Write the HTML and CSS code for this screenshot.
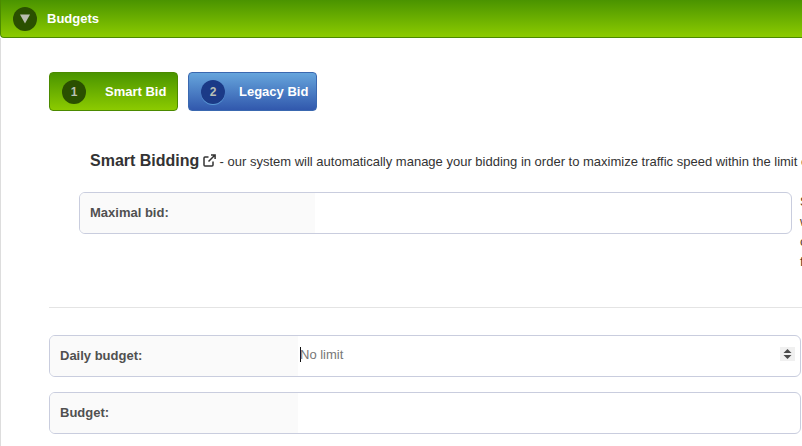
FILE: index.html
```html
<!DOCTYPE html>
<html lang="en">
<head>
<meta charset="utf-8">
<title>Budgets</title>
<link rel="stylesheet" href="styles.css">
</head>
<body>
<div class="panel">
  <header class="panel-head">
    <span class="badge badge-dark head-badge"><svg class="caret" width="12" height="10" viewBox="0 0 12 10"><path d="M1 0.5h10L6 9.5z" fill="#b9bdb0"/></svg></span>
    <span class="head-title">Budgets</span>
  </header>
  <div class="panel-body">
    <div class="tabs">
      <button class="tab tab-green"><span class="badge badge-dark tab-badge">1</span><span class="tab-label tab-label-smart">Smart Bid</span></button>
      <button class="tab tab-blue"><span class="badge badge-blue tab-badge">2</span><span class="tab-label">Legacy Bid</span></button>
    </div>
    <p class="intro"><strong class="intro-title">Smart Bidding</strong> <svg class="ext" width="13" height="13" viewBox="0 0 13 13" fill="none" stroke="#333" stroke-width="1.5"><path d="M10 7.5V11a1 1 0 0 1-1 1H2a1 1 0 0 1-1-1V4a1 1 0 0 1 1-1h3.5"/><path d="M5.5 7.5L12 1M8 .9h4.1V5"/></svg> - our system will automatically manage your bidding in order to maximize traffic speed within the limit of your maximal bid.</p>
    <div class="bid-line">
      <div class="field field-bid">
        <div class="field-label label-bid">Maximal bid:</div>
        <div class="field-value"></div>
      </div>
      <div class="note">Set<br>will<br>can<br>for</div>
    </div>
    <hr class="rule">
    <div class="field field-wide">
      <div class="field-label label-wide">Daily budget:</div>
      <div class="field-value value-select"><span class="cursor"></span><span class="placeholder">No limit</span>
        <span class="spin"><svg width="15" height="14" viewBox="0 0 15 14"><path d="M7.5 2l4 4h-8zM7.5 12l-4-4h8z" fill="#4a4a4a"/></svg></span>
      </div>
    </div>
    <div class="field field-wide">
      <div class="field-label label-wide">Budget:</div>
      <div class="field-value"></div>
    </div>
  </div>
</div>
</body>
</html>
```
FILE: styles.css
```css
* { box-sizing: border-box; }
html, body { margin: 0; height: 446px; overflow: hidden; background: #fff; }
body { font-family: "Liberation Sans", Arial, sans-serif; color: #333; width: 802px; }
.panel { width: 802px; height: 446px; overflow: hidden; }
.panel-head {
  height: 38px;
  display: flex;
  align-items: center;
  padding-left: 12px;
  background: linear-gradient(#4a9400, #8ccb00);
  border: 1px solid #4b8a00;
  border-top: 0;
  border-right: 0;
  border-radius: 0 0 0 4px;
}
.badge { display: flex; align-items: center; justify-content: center; border-radius: 50%; flex: none; }
.badge-dark { background: #2a5000; }
.badge-blue { background: #1b3a87; box-shadow: 0 1px 0 #5a9ad8; }
.head-badge { width: 24px; height: 24px; }
.head-title { margin-left: 10px; color: #fff; font-size: 13px; font-weight: 700; padding-bottom: 1px; }
.panel-body { height: 408px; border-left: 1px solid #ddd; padding: 34px 0 0 48px; }
.tabs { display: flex; gap: 10px; }
.tab {
  width: 129px; height: 39px;
  display: flex; align-items: center;
  padding: 0 0 0 12px;
  border-radius: 4px;
  color: #fff; font: 700 13px "Liberation Sans", Arial, sans-serif;
}
.tab-green { background: linear-gradient(#4a9400, #8ccb00); border: 1px solid #4b8a00; }
.tab-blue { background: linear-gradient(#66a5dc, #3158ad); border: 1px solid #3a68b0; }
.tab-badge { width: 24px; height: 24px; font-size: 12px; color: #b9c0b5; }
.tab-label { margin-left: 14px; }
.tab-label-smart { margin-left: 19px; }
.intro { margin: 40px 0 0 41px; font-size: 13px; line-height: 20px; white-space: nowrap; height: 20px; color: #333; }
.intro-title { font-size: 16px; }
.ext { vertical-align: -1px; }
.bid-line { display: flex; gap: 8px; margin: 21px 0 0 30px; width: 800px; }
.field { display: flex; height: 42px; border: 1px solid #c9cdde; border-radius: 6px; overflow: hidden; background: #fff; flex: none; }
.field-bid { width: 713px; }
.field-wide { width: 752px; margin-bottom: 15px; }
.field-label { background: #fafafa; font-size: 13px; font-weight: 700; color: #505050; display: flex; align-items: center; padding: 0 0 2px 10px; flex: none; }
.label-bid { width: 235px; }
.label-wide { width: 248px; }
.field-value { flex: 1; display: flex; align-items: center; position: relative; }
.value-select { padding-left: 2px; padding-bottom: 3px; }
.cursor { width: 1px; height: 15px; background: #111; margin-right: -1px; }
.placeholder { font-size: 13px; color: #777; }
.note { font-size: 13px; line-height: 20px; color: #5a3a1a; white-space: nowrap; flex: none; }
.rule { margin: 35px 0 27px; border: 0; border-top: 1px solid #e4e4e4; width: 760px; height: 0; }
.spin { position: absolute; right: 5px; top: 11px; width: 15px; height: 14px; background: #f0f0f0; display: flex; align-items: center; justify-content: center; }
```
